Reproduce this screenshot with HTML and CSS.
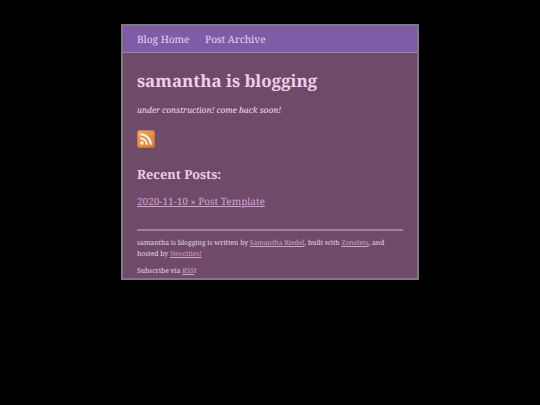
FILE: index.html
```html
<!DOCTYPE html>
<html lang="en">
<head>
<meta charset="utf-8">
<title>samantha is blogging</title>
<link rel="stylesheet" href="styles.css">
</head>
<body>
<div class="page">
  <nav class="nav">
    <a href="#">Blog Home</a>
    <a href="#">Post Archive</a>
  </nav>
  <main class="content">
    <h1>samantha is blogging</h1>
    <p class="tagline">under construction! come back soon!</p>
    <a class="rss" href="#" aria-label="RSS">
      <svg width="18" height="18" viewBox="0 0 18 18">
        <defs>
          <linearGradient id="g" x1="0" y1="0" x2="1" y2="1">
            <stop offset="0" stop-color="#f2a75e"/>
            <stop offset="1" stop-color="#d97a30"/>
          </linearGradient>
        </defs>
        <rect x="0.3" y="0.3" width="17.4" height="17.4" rx="2.5" fill="url(#g)" stroke="#c8752f" stroke-width="0.6"/>
        <circle cx="5" cy="13" r="1.7" fill="#fff4e8"/>
        <path d="M3.3 8.2a6.5 6.5 0 0 1 6.5 6.5" fill="none" stroke="#fff4e8" stroke-width="2"/>
        <path d="M3.3 4.2a10.5 10.5 0 0 1 10.5 10.5" fill="none" stroke="#fff4e8" stroke-width="2"/>
      </svg>
    </a>
    <h2>Recent Posts:</h2>
    <p class="post"><a href="#">2020-11-10 » Post Template</a></p>
    <hr>
    <footer class="foot">
      <p>samantha is blogging is written by <a href="#">Samantha Riedel</a>, built with <a href="#">Zonelets</a>, and hosted by <a href="#">Neocities!</a></p>
      <p>Subscribe via <a href="#">RSS</a>!</p>
    </footer>
  </main>
</div>
</body>
</html>
```
FILE: styles.css
```css
html, body { margin: 0; padding: 0; background: #000; }
body { font-family: "Noto Serif", "DejaVu Serif", serif; color: #f0dcf0; text-rendering: geometricPrecision; }
.page {
  box-sizing: border-box;
  width: 298px;
  height: 256px;
  margin: 24px 0 0 121px;
  border: 2px solid #7f7a80;
  background: #6f4b69;
  overflow: hidden;
}
.nav {
  display: flex;
  gap: 15.5px;
  height: 27px;
  box-sizing: border-box;
  padding: 5px 14px 0;
  background: #7f5ca8;
  border-bottom: 1px solid #9a8ba5;
  font-size: 10.15px;
  line-height: 16px;
}
.nav a { color: #e8cfec; text-decoration: none; }
.content { padding: 0 14px; }
h1 { margin: 16px 0 0; font-size: 16.9px; line-height: 24px; color: #eed0ea; }
.tagline { margin: 11px 0 0; font-size: 8.4px; line-height: 14px; font-style: italic; color: #eedeec; }
.rss { display: block; width: 18px; height: 18px; margin-top: 12px; }
.rss svg { display: block; }
h2 { margin: 16px 0 0; font-size: 12.7px; line-height: 20px; color: #eccde4; }
.post { margin: 9px 0 0; font-size: 10px; line-height: 16px; }
.post a { color: #cfa3d2; }
hr { margin: 20px 0 0; border: 0; height: 2px; background: #a08590; }
.foot { font-size: 6.8px; line-height: 11px; color: #e8d8e6; }
.foot p { margin: 6px 0 0; }
.foot a { color: #cfa3d2; }
```
